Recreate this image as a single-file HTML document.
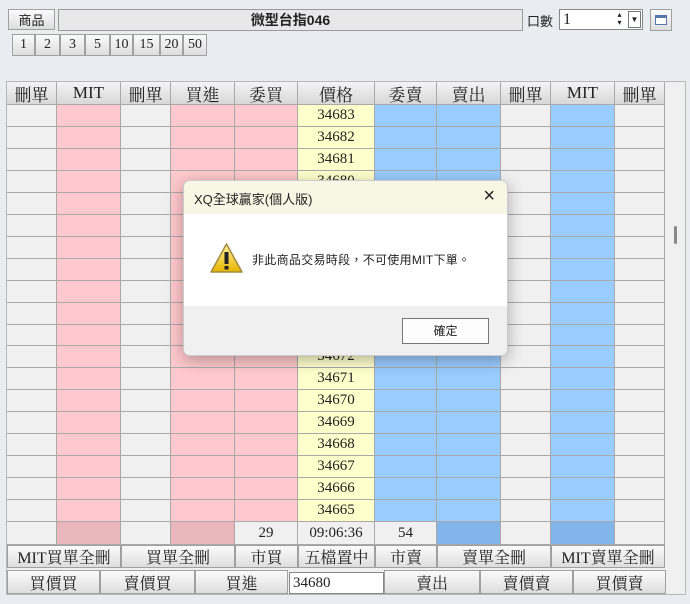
<!DOCTYPE html>
<html><head><meta charset="utf-8"><style>
*{box-sizing:border-box;margin:0;padding:0}
body{width:690px;height:604px;background:#e9edf1;position:relative;overflow:hidden;font-family:"Liberation Serif","Noto Serif CJK TC",serif;color:#222}
.a{position:absolute}
.btn{position:absolute;background:linear-gradient(#fbfbfb,#dedede);border:1px solid #a0a0a0;display:flex;align-items:center;justify-content:center;font-size:15px}
.cell{position:absolute;border-right:1px solid #a9a9a9;border-bottom:1px solid #a9a9a9;display:flex;align-items:center;justify-content:center;font-size:15px}
.hd{background:linear-gradient(#f4f4f4,#d8d8d8);font-size:17px}
</style></head><body>
<div class="btn" style="left:8px;top:9px;width:47px;height:21px;font-size:13px;font-family:'Liberation Sans','Noto Sans CJK TC',sans-serif">商品</div>
<div class="a" style="left:58px;top:9px;width:465px;height:22px;border:1px solid #9a9a9a;background:#e8e8e8;font:bold 14px 'Liberation Sans','Noto Sans CJK TC',sans-serif;text-align:center;line-height:20px">微型台指046</div>
<div class="a" style="left:527px;top:11px;font:13px 'Liberation Sans','Noto Sans CJK TC',sans-serif">口數</div>
<div class="a" style="left:559px;top:9px;width:84px;height:21px;border:1px solid #888;background:#fff;font-size:16px;padding-left:3px;line-height:19px">1</div>
<div class="a" style="left:612px;top:11px;width:15px;height:17px;font-size:8px;line-height:8px;text-align:center">▴<br>▾</div>
<div class="a" style="left:628px;top:11px;width:13px;height:17px;border:1px solid #777;font-size:8px;text-align:center;line-height:15px">▼</div>
<div class="btn" style="left:650px;top:9px;width:22px;height:22px"><div style="width:12px;height:10px;border:1px solid #5577aa;border-top:3px solid #5577aa;background:#fff"></div></div>
<div class="a" style="left:12px;top:34px;display:flex">
<div class="btn" style="position:relative;width:23px;height:22px;font-size:14px">1</div><div class="btn" style="position:relative;width:25px;height:22px;font-size:14px">2</div><div class="btn" style="position:relative;width:25px;height:22px;font-size:14px">3</div><div class="btn" style="position:relative;width:25px;height:22px;font-size:14px">5</div><div class="btn" style="position:relative;width:23px;height:22px;font-size:14px">10</div><div class="btn" style="position:relative;width:27px;height:22px;font-size:14px">15</div><div class="btn" style="position:relative;width:23px;height:22px;font-size:14px">20</div><div class="btn" style="position:relative;width:24px;height:22px;font-size:14px">50</div></div>
<div class="a" style="left:6px;top:81px;width:680px;height:514px;border:1px solid #b8b8b8;background:#f0f0f0"></div>
<div class="a" style="left:667px;top:104px;width:17px;height:420px;background:#f0f0f0"></div>
<div class="a" style="left:674px;top:226px;width:3px;height:18px;background:#888;border-radius:2px"></div>
<div id="g"></div>
<div class="a" style="left:183px;top:180px;width:325px;height:176px;background:#fff;border:1px solid #ccc;border-radius:7px;box-shadow:0 4px 16px rgba(0,0,0,.3);overflow:hidden;font-family:'Liberation Sans','Noto Sans CJK TC',sans-serif">
<div style="height:33px;background:#f8f6e4;font-size:13px;padding:8px 0 0 10px;position:relative">XQ全球贏家(個人版)<span style="position:absolute;right:12px;top:4px;font-size:20px;font-weight:300">×</span></div>
<div style="height:92px;position:relative">
<svg style="position:absolute;left:25px;top:28px" width="35" height="33" viewBox="0 0 35 33"><defs><linearGradient id="y" x1="0" y1="0" x2="0" y2="1"><stop offset="0" stop-color="#fff3a0"/><stop offset="1" stop-color="#e7b400"/></linearGradient></defs><path d="M17.5 2 L33 30 H2 Z" fill="url(#y)" stroke="#a08a40" stroke-width="1.5" stroke-linejoin="round"/><rect x="15.5" y="10" width="4" height="12" fill="#222"/><rect x="15.5" y="24" width="4" height="3.5" fill="#222"/></svg>
<div style="position:absolute;left:68px;top:37px;font-size:12px;letter-spacing:.3px">非此商品交易時段，不可使用MIT下單。</div></div>
<div style="height:51px;background:#f0f0f0;position:relative"><div style="position:absolute;left:218px;top:12px;width:87px;height:26px;border:1px solid #777;background:#fdfdfd;font-size:12px;text-align:center;line-height:24px">確定</div></div>
</div>
<script>
var xs=[7,57,121,171,235,298,375,437,501,551,615,665];
var hd=["刪單","MIT","刪單","買進","委買","價格","委賣","賣出","刪單","MIT","刪單"];
var col=["#f0f0f0","#ffc9cd","#f0f0f0","#ffc9cd","#ffc9cd","#ffffcc","#99ccff","#99ccff","#f0f0f0","#99ccff","#f0f0f0"];
var h="";
function c(x,y,w,hh,bg,t,cls){h+='<div class="cell '+(cls||'')+'" style="left:'+x+'px;top:'+y+'px;width:'+w+'px;height:'+hh+'px;'+(bg?'background:'+bg:'')+'">'+(t||'')+'</div>';}
for(var i=0;i<11;i++)c(xs[i],82,xs[i+1]-xs[i],23,null,hd[i],"hd");
for(var r=0;r<19;r++){var y0=105+Math.round(r*21.95),y1=105+Math.round((r+1)*21.95);for(var i=0;i<11;i++)c(xs[i],y0,xs[i+1]-xs[i],y1-y0,col[i],i==5?(34683-r):"");}
var y=522,lc=["#f0f0f0","#e8b6bb","#f0f0f0","#e8b6bb","#f0f0f0","#f0f0f0","#f0f0f0","#82b6ea","#f0f0f0","#82b6ea","#f0f0f0"],lt=["","","","","29","09:06:36","54","","","",""];
for(var i=0;i<11;i++)c(xs[i],y,xs[i+1]-xs[i],23,lc[i],lt[i]);
var b=[[7,121,"MIT買單全刪"],[121,235,"買單全刪"],[235,298,"市買"],[298,375,"五檔置中"],[375,437,"市賣"],[437,551,"賣單全刪"],[551,665,"MIT賣單全刪"]];
b.forEach(function(e){h+='<div class="btn" style="left:'+e[0]+'px;top:545px;width:'+(e[1]-e[0])+'px;height:23px;font-size:16px">'+e[2]+'</div>';});
var b2=[[7,100,"買價買"],[100,195,"賣價買"],[195,288,"買進"],[384,480,"賣出"],[480,573,"賣價賣"],[573,666,"買價賣"]];
b2.forEach(function(e){h+='<div class="btn" style="left:'+e[0]+'px;top:570px;width:'+(e[1]-e[0])+'px;height:24px;font-size:16px">'+e[2]+'</div>';});
h+='<div class="a" style="left:289px;top:572px;width:95px;height:22px;background:#fff;border:1px solid #888;font-size:15px;padding-left:3px;line-height:20px">34680</div>';
document.getElementById("g").innerHTML=h;
</script>
</body></html>
